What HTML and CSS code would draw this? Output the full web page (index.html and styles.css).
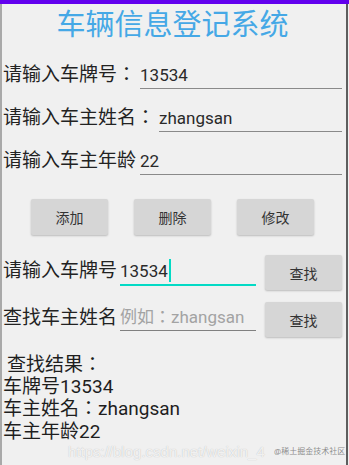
FILE: index.html
```html
<!DOCTYPE html>
<html lang="zh-CN">
<head>
<meta charset="utf-8">
<title>车辆信息登记系统</title>
<link rel="stylesheet" href="styles.css">
</head>
<body>
<div class="topbar"></div>
<div class="frame">
  <h1 class="title">车辆信息登记系统</h1>

  <div class="row">
    <span class="label">请输入车牌号<span class="colon" lang="ja">：</span></span>
    <div class="field">13534</div>
  </div>
  <div class="row">
    <span class="label">请输入车主姓名<span class="colon" lang="ja">：</span></span>
    <div class="field">zhangsan</div>
  </div>
  <div class="row">
    <span class="label">请输入车主年龄</span>
    <div class="field">22</div>
  </div>

  <div class="btns">
    <button class="btn">添加</button>
    <button class="btn">删除</button>
    <button class="btn">修改</button>
  </div>

  <div class="srow srow-first">
    <span class="label">请输入车牌号</span>
    <div class="sfield focused">13534<span class="caret"></span></div>
    <button class="btn sbtn">查找</button>
  </div>
  <div class="srow srow-second">
    <span class="label">查找车主姓名</span>
    <div class="sfield placeholder">例如<span class="colon" lang="ja">：</span>zhangsan</div>
    <button class="btn sbtn">查找</button>
  </div>

  <div class="result">
    <div class="lead ja" lang="ja">查找结果：</div>
    <div>车牌号13534</div>
    <div class="ja" lang="ja">车主姓名：zhangsan</div>
    <div>车主年龄22</div>
  </div>

  <div class="watermark">https://blog.csdn.net/weixin_4</div>
  <div class="watermark2">@稀土掘金技术社区</div>
</div>
</body>
</html>
```
FILE: styles.css
```css
* { box-sizing: border-box; }

html, body {
  margin: 0;
  padding: 0;
  background: #f0f0f0;
  font-family: "Roboto", "Noto Sans CJK SC", sans-serif;
  color: #222;
}

.topbar {
  height: 4px;
  background: #6200ee;
}

.frame {
  position: relative;
  width: 348px;
  height: 461px;
  border-left: 2px solid #a9a9a9;
  border-right: 2px solid #5e5e5e;
  padding: 0 4px 0 1px;
  overflow: hidden;
}

.title {
  margin: 0;
  font-size: 29px;
  font-weight: normal;
  line-height: 42px;
  text-align: center;
  color: #45a8e6;
}

.colon {
  display: inline-block;
  line-height: inherit;
  font-family: "Noto Sans CJK JP", "Noto Sans CJK SC", sans-serif;
}

.ja {
  font-family: "Roboto", "Noto Sans CJK JP", "Noto Sans CJK SC", sans-serif;
}

.row {
  display: flex;
  align-items: flex-end;
  height: 43px;
}

.label {
  font-size: 19px;
  line-height: 26px;
  padding-bottom: 1px;
  color: #222;
  white-space: nowrap;
}

.field {
  flex: 1;
  margin-left: 4px;
  font-size: 17px;
  line-height: 26px;
  color: #2a2a2a;
  border-bottom: 1px solid #8a8a8a;
}

.btns {
  display: flex;
  justify-content: center;
  gap: 26px;
  margin-top: 24px;
}

.btn {
  width: 77px;
  height: 36px;
  border: none;
  border-radius: 2px;
  background: #d6d6d6;
  box-shadow: 0 1px 2px rgba(0, 0, 0, 0.22);
  font-family: "Roboto", "Noto Sans CJK SC", sans-serif;
  font-size: 14px;
  color: #333;
  padding: 0;
}

.srow {
  display: flex;
  align-items: flex-end;
  height: 35px;
}

.srow-first { margin-top: 20px; }
.srow-second { margin-top: 12px; }

.srow .label {
  padding-bottom: 0;
  margin-bottom: 6px;
}

.sfield {
  width: 136px;
  margin-left: 3px;
  font-size: 17px;
  line-height: 26px;
  color: #2a2a2a;
  border-bottom: 1px solid #808080;
  margin-bottom: 6px;
  white-space: nowrap;
}

.sfield.focused {
  border-bottom: 2px solid #03dac5;
  margin-bottom: 4px;
}

.sfield.placeholder {
  color: #a3a3a3;
}

.caret {
  display: inline-block;
  width: 2px;
  height: 23px;
  margin-left: 1px;
  background: #03dac5;
  vertical-align: -5px;
}

.sbtn {
  width: 77px;
  height: 35px;
  margin-left: auto;
  flex: none;
}

.result {
  margin-top: 17px;
  font-size: 19px;
  line-height: 22.2px;
  color: #1e1e1e;
}

.result .lead {
  padding-left: 4px;
}

.watermark {
  position: absolute;
  left: 66px;
  top: 439px;
  font-family: "Liberation Sans", sans-serif;
  font-size: 15px;
  line-height: 18px;
  color: rgba(255, 255, 255, 0.8);
  text-shadow: 0 0 1px rgba(0, 0, 0, 0.25);
  white-space: nowrap;
}

.watermark2 {
  position: absolute;
  left: 272px;
  top: 443px;
  font-size: 8px;
  line-height: 10px;
  color: rgba(120, 120, 120, 0.85);
  white-space: nowrap;
}
```
